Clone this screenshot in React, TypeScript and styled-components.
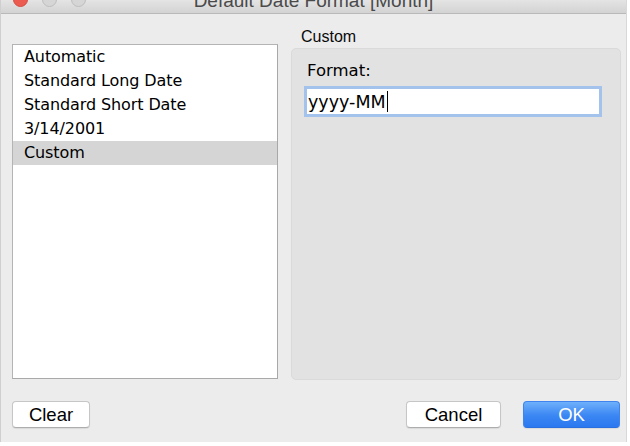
import * as React from 'react';
import styled, { createGlobalStyle } from 'styled-components';

const GlobalStyle = createGlobalStyle`
  html, body {
    margin: 0;
    padding: 0;
    background: #ffffff;
  }
`;

const Window = styled.div`
  width: 627px;
  height: 442px;
  box-sizing: border-box;
  background: #ececec;
  border-left: 1px solid #cfcfcf;
  border-right: 1px solid #d8d8d8;
  display: flex;
  flex-direction: column;
  overflow: hidden;
  color: #0a0a0a;
`;

const TitleBar = styled.div`
  height: 14px;
  flex: none;
  box-sizing: border-box;
  display: grid;
  grid-template-columns: 1fr auto 1fr;
  align-items: start;
  overflow: hidden;
  background: linear-gradient(#e4e4e4, #d3d3d3);
  border-bottom: 1px solid #b9b9b9;
`;

const Lights = styled.div`
  display: flex;
  gap: 14px;
  margin: -8px 0 0 12px;
`;

const Light = styled.span<{ $color: string; $edge: string }>`
  width: 15px;
  height: 15px;
  box-sizing: border-box;
  border-radius: 50%;
  background: ${p => p.$color};
  border: 1px solid ${p => p.$edge};
`;

const Title = styled.div`
  font-family: 'Liberation Sans', Arial, sans-serif;
  font-size: 19px;
  line-height: 19px;
  color: #4a4a4a;
  margin-top: -9px;
  white-space: nowrap;
`;

const Body = styled.div`
  display: flex;
  align-items: flex-start;
  padding: 30px 0 0 11px;
`;

const List = styled.div`
  width: 266px;
  height: 335px;
  box-sizing: border-box;
  background: #ffffff;
  border: 1px solid #b4b4b4;
  border-right-color: #a8a8a8;
  border-bottom-color: #a8a8a8;
  display: flex;
  flex-direction: column;
`;

const Item = styled.div<{ $selected?: boolean }>`
  height: 24px;
  line-height: 24px;
  padding-left: 11px;
  font-family: 'DejaVu Sans', Verdana, sans-serif;
  font-size: 16px;
  letter-spacing: -0.1px;
  color: #000;
  background: ${p => (p.$selected ? '#d5d5d5' : 'transparent')};
`;

const Side = styled.div`
  display: flex;
  flex-direction: column;
  margin-left: 13px;
  margin-top: -16px;
`;

const SideLabel = styled.div`
  font-family: 'Liberation Sans', Arial, sans-serif;
  font-size: 16px;
  line-height: 18px;
  padding-left: 10px;
  margin-bottom: 2px;
`;

const Group = styled.div`
  width: 330px;
  height: 332px;
  box-sizing: border-box;
  background: #e2e2e2;
  border: 1px solid #dadada;
  border-radius: 5px;
  padding: 12px 0 0 12px;
  display: flex;
  flex-direction: column;
`;

const FieldLabel = styled.div`
  font-family: 'DejaVu Sans', Verdana, sans-serif;
  font-size: 16.5px;
  line-height: 20px;
  padding-left: 3px;
  margin-bottom: 5px;
  color: #000;
`;

const Field = styled.div`
  width: 298px;
  height: 31px;
  box-sizing: border-box;
  background: #ffffff;
  border: 3px solid #a3c2ec;
  padding-left: 1px;
  display: flex;
  align-items: center;
  font-family: 'DejaVu Sans', Verdana, sans-serif;
  font-size: 17.5px;
  color: #000;
`;

const Caret = styled.span`
  width: 1px;
  height: 21px;
  margin-left: 1px;
  background: #000;
`;

const Footer = styled.div`
  display: flex;
  align-items: center;
  padding: 21px 6px 0 11px;
`;

const Spacer = styled.div`
  flex: 1;
`;

const Button = styled.button<{ $width: number; $primary?: boolean }>`
  width: ${p => p.$width}px;
  height: 27px;
  box-sizing: border-box;
  padding: 0;
  border-radius: 4px;
  font-family: 'Liberation Sans', Arial, sans-serif;
  font-size: 18.5px;
  line-height: 25px;
  cursor: default;
  border: 1px solid ${p => (p.$primary ? '#3f83ee' : '#c6c6c6')};
  border-bottom-color: ${p => (p.$primary ? '#2a6fe0' : '#adadad')};
  color: ${p => (p.$primary ? '#ffffff' : '#000000')};
  background: ${p =>
    p.$primary
      ? 'linear-gradient(#6eb0fb, #3a86f3 55%, #2b78f0)'
      : '#ffffff'};
  box-shadow: 0 1px 1px rgba(0, 0, 0, 0.08);
  & + & {
    margin-left: 22px;
  }
`;

const formats = [
  'Automatic',
  'Standard Long Date',
  'Standard Short Date',
  '3/14/2001',
  'Custom',
];

export default function App() {
  const selected = 'Custom';
  return (
    <>
      <GlobalStyle />
      <Window>
        <TitleBar>
          <Lights>
            <Light $color="#ec5b50" $edge="#d44a40" />
            <Light $color="#d6d6d6" $edge="#bdbdbd" />
            <Light $color="#d6d6d6" $edge="#bdbdbd" />
          </Lights>
          <Title>Default Date Format [Month]</Title>
          <div />
        </TitleBar>
        <Body>
          <List>
            {formats.map(f => (
              <Item key={f} $selected={f === selected}>
                {f}
              </Item>
            ))}
          </List>
          <Side>
            <SideLabel>Custom</SideLabel>
            <Group>
              <FieldLabel>Format:</FieldLabel>
              <Field>
                <span>yyyy-MM</span>
                <Caret />
              </Field>
            </Group>
          </Side>
        </Body>
        <Footer>
          <Button $width={78}>Clear</Button>
          <Spacer />
          <Button $width={95}>Cancel</Button>
          <Button $width={97} $primary>
            OK
          </Button>
        </Footer>
      </Window>
    </>
  );
}
